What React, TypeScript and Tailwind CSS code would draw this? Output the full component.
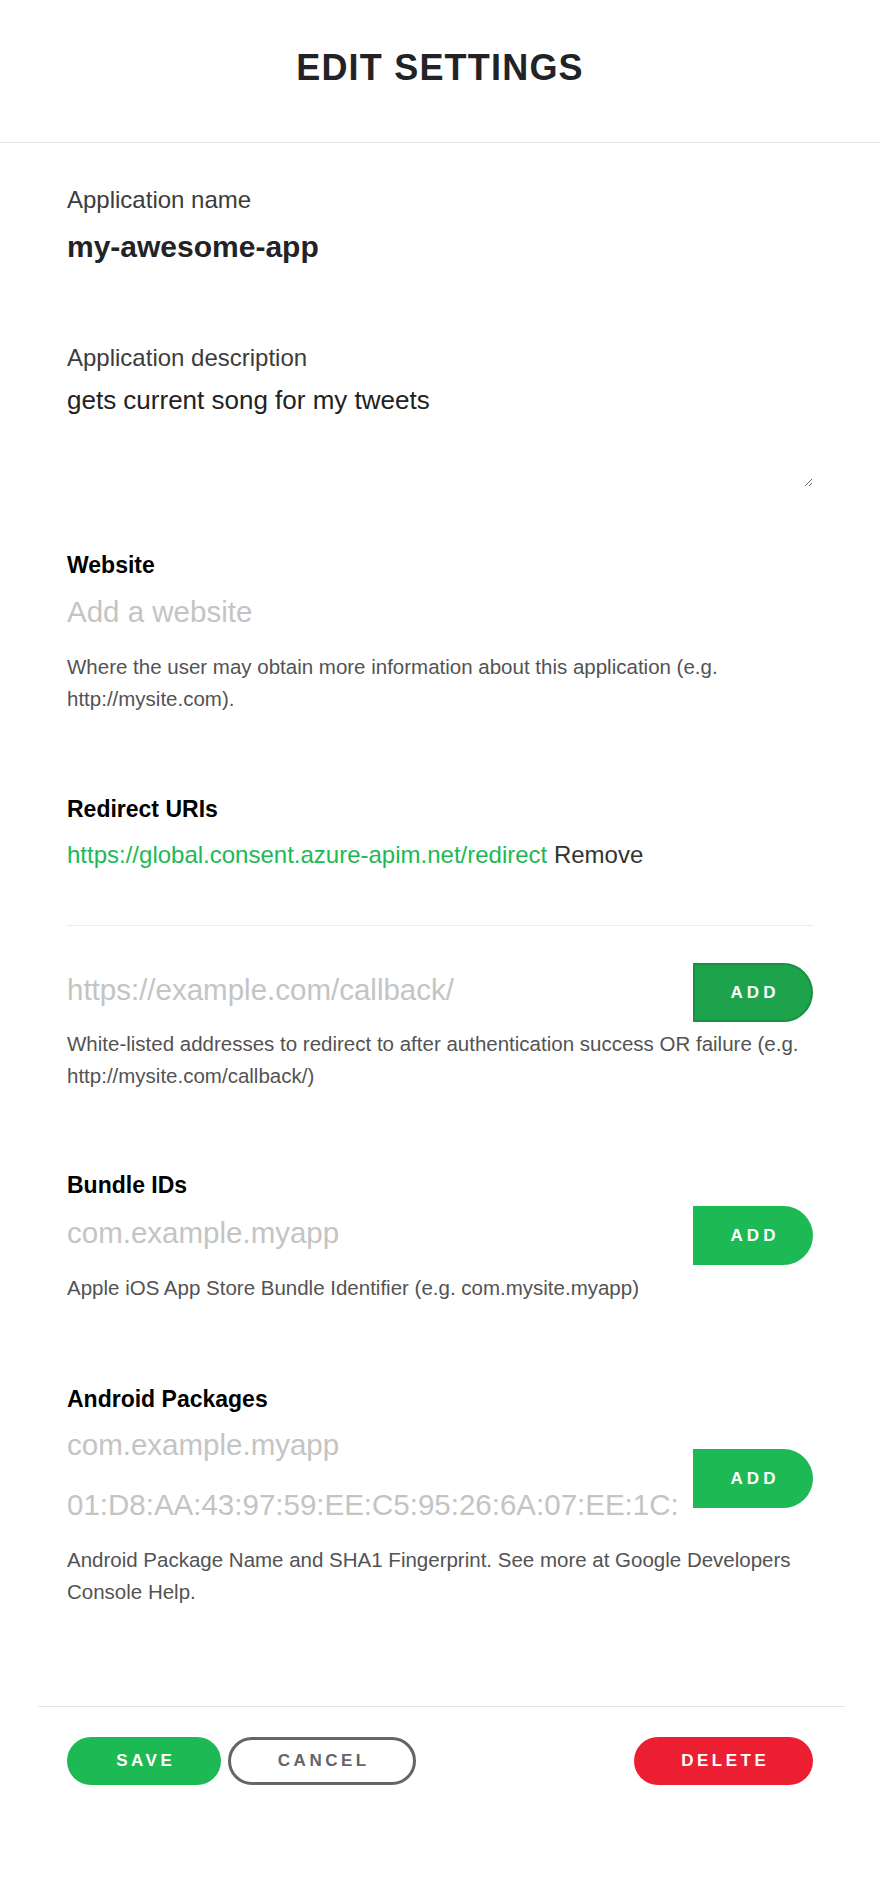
const addBtn =
  'w-[120px] h-[59px] shrink-0 rounded-l-none rounded-r-[30px] text-white text-[17px] font-bold tracking-[4px] pl-[4px]';
const footBtn =
  'h-[48px] rounded-full text-[17px] font-bold tracking-[3.5px] pl-[3.5px]';
const heading = 'text-[23px] leading-[30px] font-bold text-[#000]';
const helper = 'text-[20.5px] leading-[32px] text-[#535353]';
const field =
  'block w-full h-[40px] p-0 border-0 bg-transparent outline-none text-[29.5px] text-[#222] placeholder:text-[#c4c4c4]';

export default function App() {
  return (
    <div className="min-h-[1887px] bg-white font-['Liberation_Sans',Arial,sans-serif] text-[#222]">
      {/* header */}
      <header className="border-b border-[#e6e6e6] pt-[50px] pb-[56px] text-center">
        <h1 className="text-[36px] leading-[36px] font-bold tracking-[1.2px] text-[#222326]">
          EDIT SETTINGS
        </h1>
      </header>

      <div className="pl-[38px] pr-[35px]">
        <div className="pl-[29px] pr-[32px] pt-[41px]">
          {/* name */}
          <div className="text-[24px] leading-[32px] text-[#3c3c3c]">Application name</div>
          <div className="mt-[11px] text-[30px] leading-[40px] font-bold text-[#222326]">
            my-awesome-app
          </div>

          {/* description */}
          <div className="mt-[75px] text-[24px] leading-[32px] text-[#3c3c3c]">
            Application description
          </div>
          <textarea
            defaultValue="gets current song for my tweets"
            className="mt-[8px] block w-full h-[105px] p-0 border-0 outline-none resize-y text-[26px] leading-[36px] text-[#222]"
          />

          {/* website */}
          <div className={`mt-[63px] ${heading}`}>Website</div>
          <input className={`mt-[12px] ${field}`} placeholder="Add a website" />
          <p className={`mt-[19px] ${helper}`}>
            Where the user may obtain more information about this application (e.g.
            http://mysite.com).
          </p>

          {/* redirect URIs */}
          <div className={`mt-[79px] ${heading}`}>Redirect URIs</div>
          <div className="mt-[15px] text-[24px] leading-[32px]">
            <span className="text-[#1db954]">https://global.consent.azure-apim.net/redirect</span>{' '}
            <span className="text-[#333]">Remove</span>
          </div>
          <div className="mt-[54px] h-px bg-[#ececec]" />
          <div className="mt-[37px] flex items-start">
            <input className={`mt-[7px] flex-1 ${field}`} placeholder="https://example.com/callback/" />
            <button className={`${addBtn} bg-[#1ea34d] border-2 border-[#17913f]`}>ADD</button>
          </div>
          <p className={`mt-[6px] ${helper}`}>
            White-listed addresses to redirect to after authentication success OR failure (e.g.
            http://mysite.com/callback/)
          </p>

          {/* bundle IDs */}
          <div className={`mt-[78px] ${heading}`}>Bundle IDs</div>
          <div className="mt-[6px] flex items-start">
            <input className={`mt-[7px] flex-1 ${field}`} placeholder="com.example.myapp" />
            <button className={`${addBtn} bg-[#1db954]`}>ADD</button>
          </div>
          <p className={`mt-[7px] ${helper}`}>
            Apple iOS App Store Bundle Identifier (e.g. com.mysite.myapp)
          </p>

          {/* android */}
          <div className={`mt-[80px] ${heading}`}>Android Packages</div>
          <div className="mt-[11px] flex items-start">
            <div className="flex-1 flex flex-col gap-[20px] min-w-0">
              <input className={field} placeholder="com.example.myapp" />
              <input className={field} placeholder="01:D8:AA:43:97:59:EE:C5:95:26:6A:07:EE:1C:" />
            </div>
            <button className={`mt-[24px] ${addBtn} bg-[#1db954]`}>ADD</button>
          </div>
          <p className={`mt-[19px] ${helper}`}>
            Android Package Name and SHA1 Fingerprint. See more at Google Developers Console Help.
          </p>
        </div>

        {/* footer */}
        <div className="mt-[98px] border-t border-[#e5e5e5] pl-[29px] pr-[32px] pt-[30px] flex items-center">
          <button className={`${footBtn} w-[154px] bg-[#1db954] text-white`}>SAVE</button>
          <button
            className={`${footBtn} ml-[7px] w-[188px] border-[3px] border-[#636569] text-[#636569] bg-white`}
          >
            CANCEL
          </button>
          <button className={`${footBtn} ml-auto w-[179px] bg-[#ec1f32] text-white`}>DELETE</button>
        </div>
      </div>
    </div>
  );
}
